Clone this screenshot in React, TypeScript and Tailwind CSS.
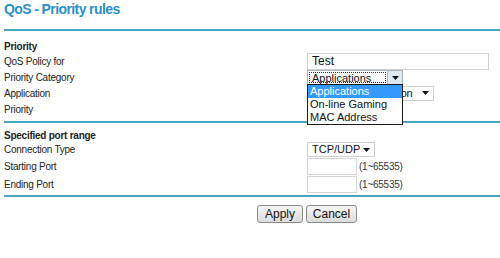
import React from 'react';

const label = "font-['Liberation_Sans',Arial,sans-serif] text-[10px] tracking-[-0.25px]";
const arial = "font-['Liberation_Sans',Arial,sans-serif]";

function Arrow() {
  return (
    <svg width="7" height="4" viewBox="0 0 7 4" className="block shrink-0">
      <path d="M0 0h7L3.5 4z" fill="#111" />
    </svg>
  );
}

function PlainSelect({ value, width, tight }: { value: string; width: string; tight?: boolean }) {
  return (
    <div className={`${width} h-[15px] border border-[#cfcfcf] bg-white flex items-center pl-[4px] pr-[4px] ${arial} text-[11px] leading-[13px] text-[#111] whitespace-nowrap`}>
      <span className={`flex-1 min-w-0 overflow-hidden ${tight ? 'tracking-[-0.35px]' : ''}`}>{value}</span>
      <span className="ml-[2px]"><Arrow /></span>
    </div>
  );
}

function Row({ text, h, children }: { text: string; h: string; children?: React.ReactNode }) {
  return (
    <div className={`flex items-center ${h}`}>
      <div className={`w-[303px] ${label} text-[#222]`}>{text}</div>
      <div className="flex items-center">{children}</div>
    </div>
  );
}

function PortInput() {
  return (
    <div className="flex items-center">
      <div className="w-[50px] h-[17px] border border-[#d4d4d4] bg-white" />
      <span className={`ml-[2px] ${label} text-[#333]`}>(1~65535)</span>
    </div>
  );
}

export default function App() {
  const options = ['Applications', 'On-line Gaming', 'MAC Address'];

  return (
    <div className="relative w-[500px] h-[258px] bg-white pl-[4px] overflow-hidden">
      {/* Title */}
      <div className={`h-[29px] pt-[1px] ${arial} text-[14px] tracking-[-0.6px] leading-[16px] font-bold text-[#2b90c8]`}>
        QoS - Priority rules
      </div>
      <div className="h-[2px] bg-[#48a6c3]" />

      {/* Priority section */}
      <div className={`mt-[10px] h-[11px] ${label} leading-[11px] font-bold text-[#222]`}>Priority</div>
      <Row text="QoS Policy for" h="h-[18px]">
        <div className={`w-[182px] h-[17px] border border-[#d0d0d0] bg-white pl-[4px] ${arial} text-[12px] leading-[15px] text-[#111]`}>Test</div>
      </Row>
      <Row text="Priority Category" h="h-[15px]">
        <div className="w-[96px] h-[15px] border border-[#a9b1ba] bg-white flex items-stretch">
          <div className={`flex-1 m-[1px] border border-dotted border-[#333] pl-[2px] ${arial} text-[11px] leading-[11px] text-[#111]`}>Applications</div>
          <div className="w-[15px] bg-[#dfe8f3] border-l border-[#a4b9d6] flex items-center justify-center">
            <Arrow />
          </div>
        </div>
      </Row>
      <Row text="Application" h="h-[16px]">
        <PlainSelect value="Add a new application" width="w-[127px]" tight />
      </Row>
      <Row text="Priority" h="h-[16px]">
        <PlainSelect value="Normal" width="w-[70px]" />
      </Row>
      <div className="mt-[4px] h-[2px] bg-[#48a6c3]" />

      {/* Port range section */}
      <div className={`mt-[6px] h-[13px] ${label} leading-[13px] font-bold text-[#222]`}>Specified port range</div>
      <Row text="Connection Type" h="h-[15px]">
        <PlainSelect value="TCP/UDP" width="w-[68px]" />
      </Row>
      <Row text="Starting Port" h="h-[18px]">
        <PortInput />
      </Row>
      <Row text="Ending Port" h="h-[18px]">
        <PortInput />
      </Row>
      <div className="mt-[2px] h-[2px] bg-[#48a6c3]" />

      {/* Buttons */}
      <div className="mt-[8px] pl-[253px] flex gap-[3px]">
        <button className={`w-[46px] h-[18px] rounded-[3px] border border-[#8a8a8a] bg-gradient-to-b from-[#f6f6f6] to-[#dcdcdc] ${arial} text-[12px] leading-[14px] text-[#111]`}>Apply</button>
        <button className={`w-[51px] h-[18px] rounded-[3px] border border-[#8a8a8a] bg-gradient-to-b from-[#f6f6f6] to-[#dcdcdc] ${arial} text-[12px] leading-[14px] text-[#111]`}>Cancel</button>
      </div>

      {/* Open dropdown list */}
      <div className={`absolute left-[307px] top-[84px] w-[96px] border border-[#1a1a1a] bg-white ${arial} text-[11px] leading-[13px] text-[#111]`}>
        {options.map((o, i) => (
          <div key={o} className={`h-[13px] pl-[2px] ${i === 0 ? 'bg-[#3399ff] text-white' : ''}`}>{o}</div>
        ))}
      </div>
    </div>
  );
}
